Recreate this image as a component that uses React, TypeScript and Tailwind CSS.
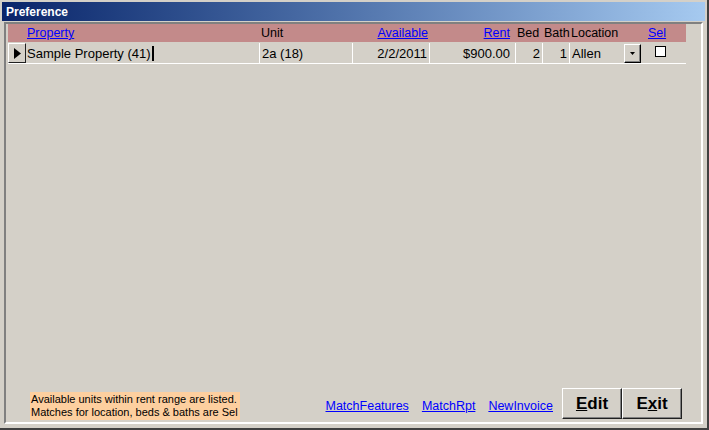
import React from 'react';

function HeaderRow() {
  return (
    <div className="ml-[2px] flex h-[18px] w-[678px] items-center bg-[#c38a8a] text-[12.5px] leading-none">
      <div className="w-[18px]" />
      <div className="w-[233px] pl-[1px]">
        <span className="text-[#0000ff] underline">Property</span>
      </div>
      <div className="w-[93px] pl-[2px] text-black">Unit</div>
      <div className="w-[77px] pr-[1px] text-right">
        <span className="text-[#0000ff] underline">Available</span>
      </div>
      <div className="w-[86px] pr-[5px] text-right">
        <span className="text-[#0000ff] underline">Rent</span>
      </div>
      <div className="w-[27px] pl-[2px] text-black">Bed</div>
      <div className="w-[27px] pl-[2px] whitespace-nowrap text-black">Bath</div>
      <div className="w-[72px] pl-[2px] text-black">Location</div>
      <div className="w-[45px] pl-[7px]">
        <span className="text-[#0000ff] underline">Sel</span>
      </div>
    </div>
  );
}

function DataRow() {
  return (
    <div className="ml-[2px] mt-[1px] flex h-[21px] w-[678px] border-b border-white text-[13px] leading-none text-black">
      {/* record selector */}
      <div className="flex w-[18px] items-center justify-center border-t border-l border-white border-r border-b border-r-[#202020] border-b-[#202020]">
        <svg width="7" height="11" viewBox="0 0 7 11">
          <path d="M0 0 L7 5.5 L0 11 Z" fill="#000" />
        </svg>
      </div>
      <div className="flex w-[233px] items-center pl-[1px] pt-[1px]">
        <span>Sample Property (41)</span>
        <span className="ml-[1px] inline-block h-[15px] w-[2px] bg-black" />
      </div>
      <div className="flex w-[93px] items-center border-l border-white pl-[2px] pt-[1px]">2a (18)</div>
      <div className="flex w-[77px] items-center justify-end border-l border-white pr-[2px] pt-[1px]">2/2/2011</div>
      <div className="flex w-[86px] items-center justify-end border-l border-white pr-[5px] pt-[1px]">$900.00</div>
      <div className="flex w-[27px] items-center justify-end border-l border-white pr-[2px] pt-[1px]">2</div>
      <div className="flex w-[27px] items-center justify-end border-l border-white pr-[2px] pt-[1px]">1</div>
      <div className="flex w-[72px] items-center border-l border-white pl-[2px]">
        <span className="flex-1 pt-[1px]">Allen</span>
        <div className="flex h-[19px] w-[17px] items-center justify-center border-t border-l border-white border-r border-b border-r-black border-b-black shadow-[inset_-1px_-1px_0_#808080]">
          <svg width="5" height="3" viewBox="0 0 5 3">
            <path d="M0 0 L5 0 L2.5 3 Z" fill="#000" />
          </svg>
        </div>
      </div>
      <div className="flex w-[45px] items-start pl-[14px] pt-[3px]">
        <div className="h-[11px] w-[11px] border border-black bg-white" />
      </div>
    </div>
  );
}

function Btn({ pre, ul, post }: { pre: string; ul: string; post: string }) {
  return (
    <div className="flex h-[31px] w-[60px] items-center justify-center border-t border-l border-white border-r border-b border-r-[#202020] border-b-[#202020] shadow-[inset_-1px_-1px_0_#808080] text-[17px] font-bold text-black">
      <span>
        {pre}
        <span className="underline">{ul}</span>
        {post}
      </span>
    </div>
  );
}

export default function App() {
  return (
    <div className="flex h-[430px] w-[709px] flex-col border-r-2 border-b-2 border-[#404040] bg-[#d4d0c8] p-[2px] font-['Liberation_Sans',Arial,sans-serif]">
      {/* title bar */}
      <div className="flex h-[19px] items-center bg-gradient-to-r from-[#0a246a] to-[#a6caf0] pl-[4px] text-[12px] font-bold text-white">
        Preference
      </div>

      {/* form */}
      <div className="mx-[2px] mt-[1px] mb-[2px] flex flex-1 flex-col border-2 border-t-[#808080] border-l-[#808080] border-r-white border-b-white">
        <HeaderRow />
        <DataRow />

        <div className="flex-1" />

        {/* footer */}
        <div className="flex items-end justify-between pl-[24px] pr-[19px] pb-[2px]">
          <div className="flex h-[28px] w-[210px] flex-col justify-center bg-[#fdcf9f] pl-[1px] text-[11px] leading-[13px] text-black">
            <span>Available units within rent range are listed.</span>
            <span>Matches for location, beds &amp; baths are Sel</span>
          </div>
          <div className="mb-[1px] flex items-center">
            <div className="mt-[5px] flex gap-[13px] text-[12.5px] text-[#0000ff] underline">
              <span>MatchFeatures</span>
              <span>MatchRpt</span>
              <span>NewInvoice</span>
            </div>
            <div className="ml-[9px] flex">
              <Btn pre="" ul="E" post="dit" />
              <Btn pre="E" ul="x" post="it" />
            </div>
          </div>
        </div>
      </div>
    </div>
  );
}
